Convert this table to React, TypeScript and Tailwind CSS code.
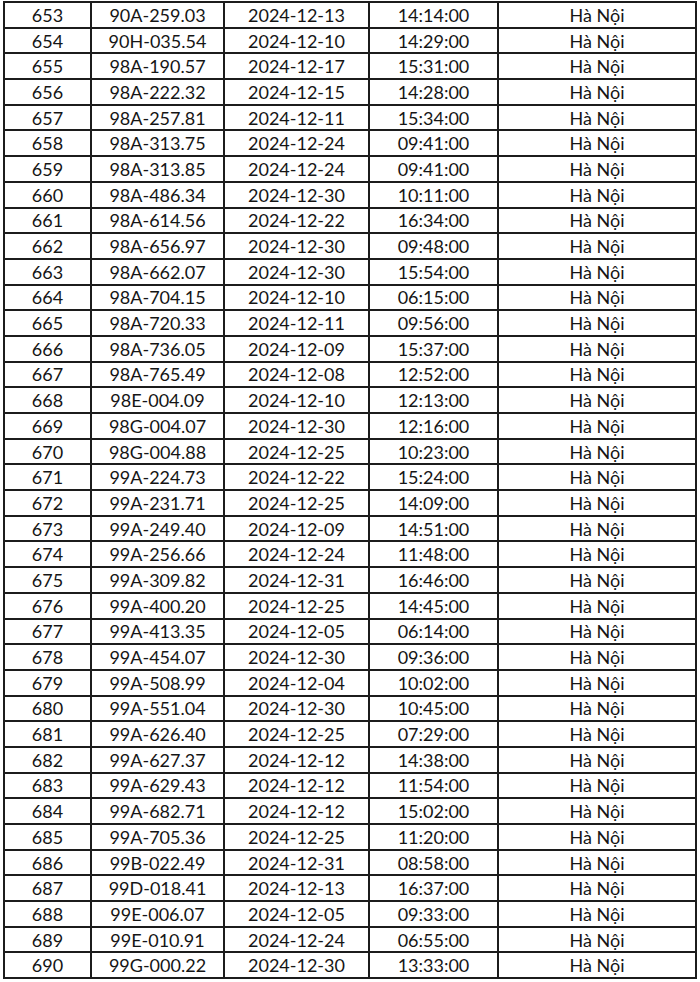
const rows: [string, string, string][] = [
  ["90A-259.03", "2024-12-13", "14:14:00"],
  ["90H-035.54", "2024-12-10", "14:29:00"],
  ["98A-190.57", "2024-12-17", "15:31:00"],
  ["98A-222.32", "2024-12-15", "14:28:00"],
  ["98A-257.81", "2024-12-11", "15:34:00"],
  ["98A-313.75", "2024-12-24", "09:41:00"],
  ["98A-313.85", "2024-12-24", "09:41:00"],
  ["98A-486.34", "2024-12-30", "10:11:00"],
  ["98A-614.56", "2024-12-22", "16:34:00"],
  ["98A-656.97", "2024-12-30", "09:48:00"],
  ["98A-662.07", "2024-12-30", "15:54:00"],
  ["98A-704.15", "2024-12-10", "06:15:00"],
  ["98A-720.33", "2024-12-11", "09:56:00"],
  ["98A-736.05", "2024-12-09", "15:37:00"],
  ["98A-765.49", "2024-12-08", "12:52:00"],
  ["98E-004.09", "2024-12-10", "12:13:00"],
  ["98G-004.07", "2024-12-30", "12:16:00"],
  ["98G-004.88", "2024-12-25", "10:23:00"],
  ["99A-224.73", "2024-12-22", "15:24:00"],
  ["99A-231.71", "2024-12-25", "14:09:00"],
  ["99A-249.40", "2024-12-09", "14:51:00"],
  ["99A-256.66", "2024-12-24", "11:48:00"],
  ["99A-309.82", "2024-12-31", "16:46:00"],
  ["99A-400.20", "2024-12-25", "14:45:00"],
  ["99A-413.35", "2024-12-05", "06:14:00"],
  ["99A-454.07", "2024-12-30", "09:36:00"],
  ["99A-508.99", "2024-12-04", "10:02:00"],
  ["99A-551.04", "2024-12-30", "10:45:00"],
  ["99A-626.40", "2024-12-25", "07:29:00"],
  ["99A-627.37", "2024-12-12", "14:38:00"],
  ["99A-629.43", "2024-12-12", "11:54:00"],
  ["99A-682.71", "2024-12-12", "15:02:00"],
  ["99A-705.36", "2024-12-25", "11:20:00"],
  ["99B-022.49", "2024-12-31", "08:58:00"],
  ["99D-018.41", "2024-12-13", "16:37:00"],
  ["99E-006.07", "2024-12-05", "09:33:00"],
  ["99E-010.91", "2024-12-24", "06:55:00"],
  ["99G-000.22", "2024-12-30", "13:33:00"],
];

const cell =
  "flex h-[25.7px] items-center justify-center border-r-2 border-b-2 border-[#1c1c1c] leading-none";

export default function App() {
  return (
    <div className="h-[982px] w-[700px] bg-white pt-px pl-[3px] font-['Lato','Liberation_Sans',sans-serif] text-[18px] text-[#151515]">
      <div className="grid w-[694px] grid-cols-[87px_133px_145px_129px_198px] border-t-2 border-l-2 border-[#1c1c1c]">
        {rows.map(([plate, date, time], i) => (
          <div key={plate + i} className="contents">
            <div className={cell}>{653 + i}</div>
            <div className={cell}>{plate}</div>
            <div className={cell}>{date}</div>
            <div className={cell}>{time}</div>
            <div className={cell}>Hà Nội</div>
          </div>
        ))}
      </div>
    </div>
  );
}
